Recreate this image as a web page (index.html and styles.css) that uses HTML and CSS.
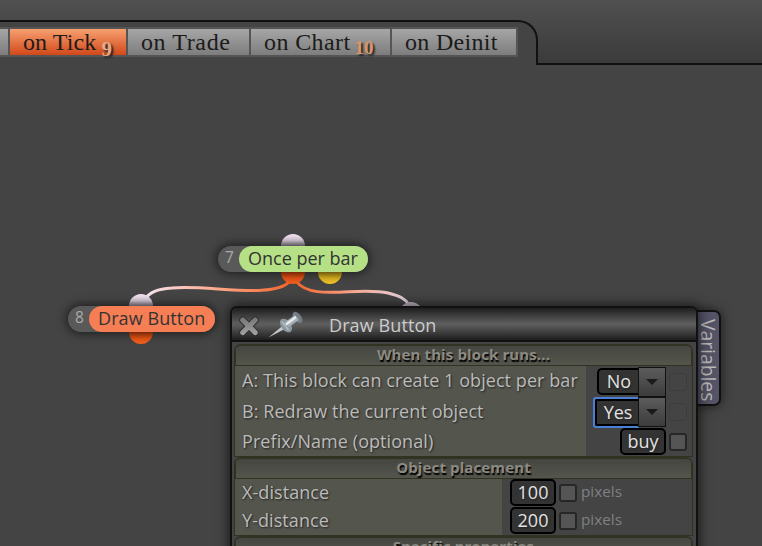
FILE: index.html
```
<!DOCTYPE html>
<html lang="en">
<head>
  <meta charset="UTF-8">
  <title>Block editor</title>
  <link rel="stylesheet" href="styles.css">
</head>
<body>

<div class="header">
  <div class="tabs-wrap">
    <div class="tabs">
      <div class="tab first"></div>
      <div class="tab tick active"><span>on Tick</span><b class="nine">9</b></div>
      <div class="tab trade"><span>on Trade</span></div>
      <div class="tab chart"><span>on Chart</span><b>10</b></div>
      <div class="tab deinit"><span>on Deinit</span></div>
    </div>
  </div>
</div>

<!-- free canvas with the blocks -->
<div class="canvas">
  <svg class="wires" width="762" height="546" viewBox="0 0 762 546">
    <defs>
      <linearGradient id="w1" gradientUnits="userSpaceOnUse" x1="143" y1="0" x2="290" y2="0">
        <stop offset="0" stop-color="#f4e4f2"/>
        <stop offset="0.5" stop-color="#ffa98c"/>
        <stop offset="1" stop-color="#f2652c"/>
      </linearGradient>
      <linearGradient id="w2" gradientUnits="userSpaceOnUse" x1="296" y1="0" x2="410" y2="0">
        <stop offset="0" stop-color="#f2652c"/>
        <stop offset="0.5" stop-color="#f8a78f"/>
        <stop offset="1" stop-color="#e6d8e6"/>
      </linearGradient>
      <linearGradient id="pin-in" x1="0" y1="0" x2="0" y2="1">
        <stop offset="0" stop-color="#f5e6f6"/>
        <stop offset="0.28" stop-color="#d9ccda"/>
        <stop offset="0.5" stop-color="#908792"/>
      </linearGradient>
      <linearGradient id="pin-out" x1="0" y1="0" x2="0" y2="1">
        <stop offset="0.5" stop-color="#bb3f0d"/>
        <stop offset="0.75" stop-color="#e85516"/>
        <stop offset="1" stop-color="#f4601d"/>
      </linearGradient>
      <linearGradient id="pin-alt" x1="0" y1="0" x2="0" y2="1">
        <stop offset="0.5" stop-color="#b28d18"/>
        <stop offset="0.75" stop-color="#e0b522"/>
        <stop offset="1" stop-color="#f2c528"/>
      </linearGradient>
    </defs>
    <path d="M290 281C274 300 206 284 172 288C157 289 150 292 144 300" fill="none" stroke="url(#w1)" stroke-width="3"/>
    <path d="M296 281C311 302 358 286 388 293C400 296 406 299 410 306" fill="none" stroke="url(#w2)" stroke-width="3"/>
    <circle cx="293" cy="246" r="12" fill="url(#pin-in)"/>
    <circle cx="293" cy="272" r="12" fill="url(#pin-out)"/>
    <circle cx="330" cy="272" r="12" fill="url(#pin-alt)"/>
    <circle cx="141" cy="306" r="12" fill="url(#pin-in)"/>
    <circle cx="141" cy="332" r="12" fill="url(#pin-out)"/>
    <circle cx="411" cy="314" r="12" fill="#c9bccb"/>
  </svg>
  <div class="block once"><i>7</i><span>Once per bar</span></div>
  <div class="block draw"><i>8</i><span>Draw Button</span></div>
</div>

<div class="side-tab">Variables</div>

<div class="window">
  <div class="titlebar">
    <svg class="close" width="22" height="22" viewBox="0 0 22 22">
      <defs>
        <linearGradient id="x-fill" gradientUnits="userSpaceOnUse" x1="0" y1="3" x2="0" y2="20">
          <stop offset="0" stop-color="#777"/>
          <stop offset="1" stop-color="#a2a2a2"/>
        </linearGradient>
      </defs>
      <path d="M4.800 5L17.200 17.500M17.200 5L4.800 17.500" stroke="#2b2b2b" stroke-width="7" stroke-linecap="round"/>
      <path d="M4.800 5L17.200 17.500M17.200 5L4.800 17.500" stroke="url(#x-fill)" stroke-width="5.200" stroke-linecap="round"/>
    </svg>
    <svg class="pushpin" width="36" height="28" viewBox="0 0 36 28">
      <path d="M0.500 26.500L15 14.500L17.500 17.500Z" fill="#c6cacc"/>
      <ellipse cx="18" cy="14.500" rx="4.800" ry="7.800" transform="rotate(-38 18 14.500)" fill="#8b979d"/>
      <ellipse cx="29.500" cy="6.500" rx="3.800" ry="6.500" transform="rotate(-38 29.500 6.500)" fill="#717e85"/>
      <path d="M17 11L27 4L31 9L21 16Z" fill="#a3adb2"/>
      <path d="M18 13.500L28 6" stroke="#e6eaeb" stroke-width="2.500"/>
      <path d="M14 10.500L20.500 19" stroke="#b5bfc3" stroke-width="1.500"/>
    </svg>
    <span>Draw Button</span>
  </div>

  <div class="section s1">
    <h3>When this block runs...</h3>
    <div class="row r1">
      <label>A: This block can create 1 object per bar</label>
      <div class="value"><div class="combo no"><b>No</b><em></em></div><u class="check faint"></u></div>
    </div>
    <div class="row r2">
      <label>B: Redraw the current object</label>
      <div class="value"><div class="combo yes focus"><b>Yes</b><em></em></div><u class="check faint"></u></div>
    </div>
    <div class="row r3">
      <label>Prefix/Name (optional)</label>
      <div class="value"><div class="field">buy</div><u class="check"></u></div>
    </div>
  </div>

  <div class="section s2">
    <h3>Object placement</h3>
    <div class="row">
      <label>X-distance</label>
      <div class="value"><div class="field">100</div><u class="check"></u><small>pixels</small></div>
    </div>
    <div class="row">
      <label>Y-distance</label>
      <div class="value"><div class="field">200</div><u class="check"></u><small>pixels</small></div>
    </div>
  </div>

  <div class="section s3">
    <h3>Specific properties</h3>
  </div>
</div>

</body>
</html>
```
FILE: styles.css
```
* {
  box-sizing: border-box;
}
body {
  margin: 0;
  height: 546px;
  overflow: hidden;
  position: relative;
  background-color: #444;
  font-family: "Open Sans", "Noto Sans", sans-serif;
}

/* top bar */
.header {
  height: 65px;
  padding-top: 20px;
  background: linear-gradient(#505050, #3b3b3b);
  border-bottom: 2px solid #111;
}
.tabs-wrap {
  width: 538px;
  height: 45px;
  padding-top: 5px;
  background-color: #444;
  border-top: 2px solid #111;
  border-right: 2px solid #111;
  border-top-right-radius: 20px;
}
.tabs {
  display: flex;
  gap: 2px;
  width: 518px;
  height: 30px;
  padding: 2px 2px 2px 0;
  background-color: #555;
}
.tab {
  display: flex;
  height: 26px;
  padding-left: 13px;
  background: linear-gradient(#a6a6a6, #7d7d7d);
  color: #1b1b1b;
  font: 24px/27px "Liberation Serif", serif;
  white-space: nowrap;
}
.tab b {
  margin: 5px 0 0 4px;
  color: #d9966c;
  font-size: 19px;
  font-weight: bold;
  text-shadow: 2px 2px 2px #222;
}
.tab .nine {
  margin: 7px 0 0 5px;
  color: #e0aa88;
  font-size: 21px;
}
.first { width: 8px; padding: 0; }
.tick { width: 116px; }
.trade { width: 121px; }
.chart { width: 139px; }
.deinit { width: 124px; }
.active {
  background: linear-gradient(#f7a070, #d2481a);
}
.tick span { letter-spacing: 0.1px; }
.trade span { letter-spacing: 0.6px; }
.chart span { letter-spacing: 0.4px; }
.deinit span { letter-spacing: 0.3px; }

/* blocks */
.canvas, .wires {
  position: absolute;
  left: 0;
  top: 0;
}
.block {
  position: absolute;
  display: flex;
  height: 26px;
  border-radius: 13px;
  background-color: #595959;
  box-shadow: 0 0 10px 2px rgba(0, 0, 0, 0.55);
  font-size: 18px;
  line-height: 25px;
  white-space: nowrap;
}
.block i {
  width: 21px;
  padding-left: 7px;
  color: #aaa;
  font-size: 15.5px;
  font-style: normal;
  line-height: 22px;
}
.block span {
  flex: 1;
  padding-left: 9px;
  border-radius: 13px;
  color: #333;
}
.once { left: 218px; top: 246px; width: 150px; }
.once span { background-color: #b5e086; }
.draw { left: 68px; top: 306px; width: 147px; }
.draw span {
  background-color: #f67e54;
  letter-spacing: 0.08px;
}

.side-tab {
  position: absolute;
  left: 694px;
  top: 310px;
  width: 27px;
  height: 96px;
  padding-top: 7px;
  border: 2px solid #111;
  border-radius: 0 7px 7px 0;
  background-color: #555466;
  box-shadow: 0 0 12px rgba(0, 0, 0, 0.6);
  color: #bbb;
  font-size: 19.3px;
  line-height: 21px;
  writing-mode: vertical-rl;
}

/* properties window */
.window {
  position: absolute;
  left: 230px;
  top: 306px;
  width: 468px;
  height: 260px;
  padding: 0 3px 0 2px;
  border: 2px solid #111;
  border-radius: 7px 7px 0 0;
  background-color: #444;
  box-shadow: 0 0 12px 2px rgba(0, 0, 0, 0.6);
}
.titlebar {
  display: flex;
  align-items: center;
  height: 34px;
  margin: 0 -3px 2px -2px;
  padding-left: 6px;
  border-bottom: 2px solid #111;
  border-radius: 5px 5px 0 0;
  background: linear-gradient(#1e1e1e, #5c5c5c 47%, #5c5c5c 53%, #1e1e1e);
  color: #ccc;
  font-size: 18px;
}
.close { margin-top: 4px; }
.pushpin { margin: 1px 0 0 8px; }
.titlebar span {
  margin: 2px 0 0 25px;
  line-height: 30px;
  letter-spacing: 0.1px;
}
.section {
  overflow: hidden;
  border: 1px solid #323222;
  border-top-width: 2px;
  border-radius: 7px 7px 0 0;
}
.section h3 {
  height: 20px;
  margin: 0;
  border: 1px solid #323222;
  border-width: 0 1px 1px;
  background: linear-gradient(#454640, #54554c);
  color: #8b8b84;
  font-size: 15px;
  font-weight: bold;
  letter-spacing: 0.12px;
  line-height: 17px;
  text-align: center;
  text-shadow: 1px 2px 1px #000;
}
.s1 { height: 113px; }
.s2 { height: 79px; }
.row {
  display: flex;
  height: 28px;
  color: #bbb;
  font-size: 18px;
  line-height: 26px;
  text-shadow: 1px 1px 2px #222;
}
.row label {
  width: 351px;
  padding-left: 7px;
  background-color: #54554c;
  letter-spacing: 0.07px;
  white-space: nowrap;
}
.s2 label { width: 267px; }
.r1, .r2 { height: 31px; }
.r1 { line-height: 28px; }
.r2 { line-height: 28px; }
.value {
  display: flex;
  flex: 1;
  align-items: center;
  justify-content: flex-end;
  gap: 3px;
  padding: 0 5px 1px 0;
}
.r1 .value { padding-bottom: 0; }
.s2 .value {
  justify-content: flex-start;
  padding-left: 8px;
}
.combo {
  display: flex;
  align-items: center;
}
.combo b, .field {
  height: 27px;
  border: 2px solid #000;
  background-color: #333;
  color: #e2e2e2;
  font-weight: normal;
  font-size: 18px;
  line-height: 23px;
  text-align: center;
}
.combo b {
  width: 42px;
  border-right: 0;
  border-radius: 5px 0 0 5px;
}
.combo.yes b {
  width: 44px;
  border-radius: 2px 0 0 2px;
}
.focus b {
  box-shadow: -1px -1px 0 1px #4a7fd6, -1px 1px 0 1px #4a7fd6;
}
.combo em {
  display: flex;
  align-items: center;
  justify-content: center;
  width: 28px;
  height: 30px;
  margin-left: -1px;
  border: 1px solid #111;
  background: linear-gradient(#5c5c5c, #3c3c3c);
  z-index: 1;
}
.combo em::after {
  content: "";
  border: 6px solid transparent;
  border-top-color: #1a1a1a;
  border-bottom: 0;
}
.field {
  width: 46px;
  border-radius: 5px;
}
.check {
  width: 18px;
  height: 18px;
  border: 2px solid #272727;
  border-radius: 3px;
  background-color: #555;
}
.faint {
  border: 1px solid #3d3d3d;
  background-color: #444;
}
.value small {
  margin: -3px 0 0 1px;
  color: #808080;
  font-size: 15.3px;
  text-shadow: none;
}
```
